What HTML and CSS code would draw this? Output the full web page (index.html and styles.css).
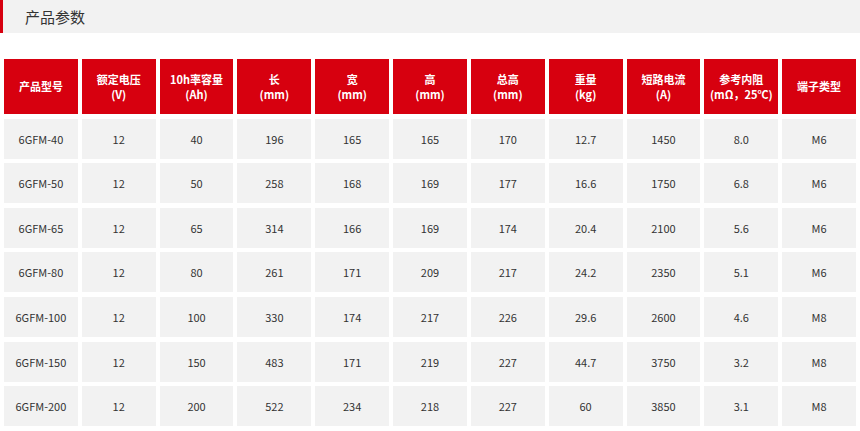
FILE: index.html
```html
<!DOCTYPE html>
<html lang="zh-CN">
<head>
<meta charset="utf-8">
<title>产品参数</title>
<link rel="stylesheet" href="styles.css">
</head>
<body>
<div class="title-bar"><span class="title">产品参数</span></div>
<div class="spec-grid">
  <div class="th">产品型号</div>
  <div class="th">额定电压<br>(V)</div>
  <div class="th">10h率容量<br>(Ah)</div>
  <div class="th">长<br>(mm)</div>
  <div class="th">宽<br>(mm)</div>
  <div class="th">高<br>(mm)</div>
  <div class="th">总高<br>(mm)</div>
  <div class="th">重量<br>(kg)</div>
  <div class="th">短路电流<br>(A)</div>
  <div class="th">参考内阻<br>(mΩ，25℃)</div>
  <div class="th">端子类型</div>

  <div class="td">6GFM-40</div><div class="td">12</div><div class="td">40</div><div class="td">196</div><div class="td">165</div><div class="td">165</div><div class="td">170</div><div class="td">12.7</div><div class="td">1450</div><div class="td">8.0</div><div class="td">M6</div>
  <div class="td">6GFM-50</div><div class="td">12</div><div class="td">50</div><div class="td">258</div><div class="td">168</div><div class="td">169</div><div class="td">177</div><div class="td">16.6</div><div class="td">1750</div><div class="td">6.8</div><div class="td">M6</div>
  <div class="td">6GFM-65</div><div class="td">12</div><div class="td">65</div><div class="td">314</div><div class="td">166</div><div class="td">169</div><div class="td">174</div><div class="td">20.4</div><div class="td">2100</div><div class="td">5.6</div><div class="td">M6</div>
  <div class="td">6GFM-80</div><div class="td">12</div><div class="td">80</div><div class="td">261</div><div class="td">171</div><div class="td">209</div><div class="td">217</div><div class="td">24.2</div><div class="td">2350</div><div class="td">5.1</div><div class="td">M6</div>
  <div class="td">6GFM-100</div><div class="td">12</div><div class="td">100</div><div class="td">330</div><div class="td">174</div><div class="td">217</div><div class="td">226</div><div class="td">29.6</div><div class="td">2600</div><div class="td">4.6</div><div class="td">M8</div>
  <div class="td">6GFM-150</div><div class="td">12</div><div class="td">150</div><div class="td">483</div><div class="td">171</div><div class="td">219</div><div class="td">227</div><div class="td">44.7</div><div class="td">3750</div><div class="td">3.2</div><div class="td">M8</div>
  <div class="td">6GFM-200</div><div class="td">12</div><div class="td">200</div><div class="td">522</div><div class="td">234</div><div class="td">218</div><div class="td">227</div><div class="td">60</div><div class="td">3850</div><div class="td">3.1</div><div class="td">M8</div>
</div>
</body>
</html>
```
FILE: styles.css
```css
html, body {
  margin: 0;
  padding: 0;
  background: #ffffff;
  font-family: "Noto Sans CJK SC", sans-serif;
}

.title-bar {
  height: 33px;
  background: #f2f2f2;
  border-left: 3px solid #d7000f;
  display: flex;
  align-items: center;
  padding-left: 22px;
}

.title {
  font-size: 15px;
  color: #333333;
}

.spec-grid {
  display: grid;
  grid-template-columns: repeat(11, 1fr);
  grid-template-rows: 55px;
  grid-auto-rows: 40px;
  column-gap: 4px;
  row-gap: 4.6px;
  padding: 26px 4px 0 4px;
}

.th {
  background: #d7000f;
  color: #ffffff;
  font-weight: 700;
  font-size: 11px;
  line-height: 15px;
  display: flex;
  align-items: center;
  justify-content: center;
  text-align: center;
}

.td {
  background: #f2f2f2;
  color: #333333;
  font-size: 11px;
  display: flex;
  align-items: center;
  justify-content: center;
  text-align: center;
}
```
